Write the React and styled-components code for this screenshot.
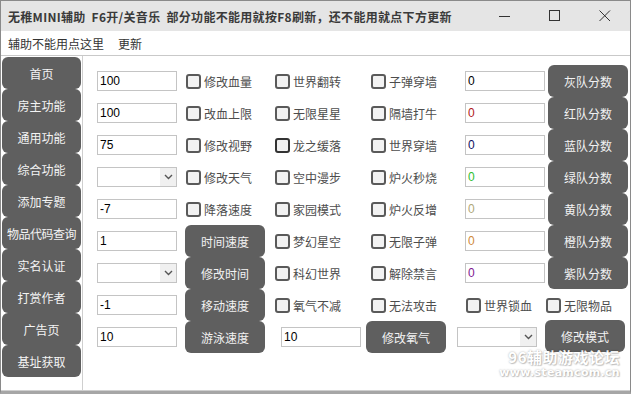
import React from "react";
import styled, { createGlobalStyle } from "styled-components";

const Global = createGlobalStyle`
  html, body { margin: 0; padding: 0; background: #fff; }
  body { font-family: "Noto Sans CJK SC", "Noto Sans", sans-serif; }
  * { box-sizing: border-box; }
`;

const Window = styled.div`
  position: relative;
  width: 631px;
  height: 394px;
  border: 1px solid #8a8a8a;
  border-bottom: 3px solid #a6a6a6;
  background: #fff;
  display: flex;
  flex-direction: column;
  overflow: hidden;
`;

const TitleBar = styled.div`
  height: 30px;
  background: #e5e5e5;
  display: flex;
  align-items: center;
  padding-left: 7px;
`;

const Title = styled.div`
  font-size: 12px;
  font-weight: 700;
  color: #3a3a3a;
  white-space: pre;
  letter-spacing: 0.3px;
`;

const Controls = styled.div`
  margin-left: auto;
  display: flex;
  height: 100%;
`;

const Ctrl = styled.div`
  width: 50px;
  height: 100%;
  display: flex;
  align-items: center;
  justify-content: center;
`;

const MenuBar = styled.div`
  height: 25px;
  border-bottom: 1px solid #c9c9c9;
  display: flex;
  align-items: center;
  padding-left: 7px;
  gap: 14px;
  font-size: 12px;
  color: #333;
`;

const Body = styled.div`
  flex: 1;
  display: flex;
  border-bottom: 1px solid #cfcfcf;
`;

const Nav = styled.div`
  width: 82px;
  border-right: 1px solid #cfcfcf;
  padding: 1px 0 0 1px;
  display: flex;
  flex-direction: column;
`;

const NavButton = styled.div`
  width: 79px;
  height: 32px;
  border-radius: 6px;
  background: #5f5f5f;
  color: #f4f4f4;
  font-size: 12px;
  display: flex;
  align-items: center;
  justify-content: center;
  padding-top: ${(p) => (p.$tight ? "0" : "1px")};
  letter-spacing: ${(p) => (p.$tight ? "-0.5px" : "0")};
`;

const Panel = styled.div`
  flex: 1;
  display: grid;
  grid-template-columns: 88px 88px 96px 94px 85px 80px;
  grid-template-rows: repeat(9, 32px);
  padding: 9px 0 0 14px;
  align-content: start;
`;

const TextBox = styled.input`
  width: ${(p) => p.$w || 80}px;
  height: 20px;
  border: 1px solid #c4c4c4;
  padding: 0 0 0 2px;
  margin: 0 0 0 ${(p) => p.$ml || 0}px;
  font-family: "Liberation Sans", Arial, sans-serif;
  font-size: 12px;
  color: ${(p) => p.$color || "#000"};
  align-self: center;
  outline: none;
  background: #fff;
`;

const SelectBox = styled.div`
  width: 80px;
  height: 20px;
  border: 1px solid #c4c4c4;
  align-self: center;
  display: flex;
  justify-content: flex-end;
  margin-left: ${(p) => p.$ml || 0}px;
  background: #fff;
`;

const SelectArrow = styled.div`
  width: 16px;
  height: 100%;
  background: #f0f0f0;
  display: flex;
  align-items: center;
  justify-content: center;
`;

const Button = styled.div`
  width: 80px;
  height: 32px;
  border-radius: 6px;
  background: #5f5f5f;
  color: #f2f2f2;
  font-size: 12px;
  display: flex;
  align-items: center;
  justify-content: center;
  margin-left: ${(p) => p.$ml || 0}px;
  margin-top: ${(p) => p.$mt || 0}px;
  flex-shrink: 0;
`;

const Check = styled.label`
  display: flex;
  align-items: center;
  gap: 3px;
  font-size: 12px;
  color: #4d4d4d;
  align-self: center;
  margin-left: ${(p) => p.$ml || 0}px;
  white-space: nowrap;
`;

const Box = styled.span`
  width: 15px;
  height: 15px;
  border: 2px solid ${(p) => (p.$dark ? "#333" : "#5a5a5a")};
  border-radius: 3px;
  background: #f2f2f2;
  display: inline-block;
`;

const Span = styled.div`
  grid-column: ${(p) => p.$col};
  display: flex;
  align-items: center;
`;

const Watermark = styled.div`
  position: absolute;
  right: 10px;
  bottom: 12px;
  text-align: right;
  color: #ffffff;
  font-weight: 700;
  text-shadow: 0 0 2px rgba(0, 0, 0, 0.35), 1px 1px 1px rgba(0, 0, 0, 0.2);
  opacity: 0.9;
  display: flex;
  flex-direction: column;
  gap: 1px;
`;

const WmTop = styled.div`
  font-size: 15px;
  line-height: 17px;
  letter-spacing: 0.5px;
`;

const WmBottom = styled.div`
  font-family: "DejaVu Sans", sans-serif;
  font-size: 11px;
  line-height: 13px;
  letter-spacing: 0.3px;
`;

const CB = ({ label, dark, ml }) => (
  <Check $ml={ml}>
    <Box $dark={dark} />
    {label}
  </Check>
);

const Chevron = () => (
  <svg width="9" height="6" viewBox="0 0 9 6">
    <path d="M1 1 L4.5 4.5 L8 1" fill="none" stroke="#555" strokeWidth="1.4" />
  </svg>
);

const Select = ({ ml }) => (
  <SelectBox $ml={ml}>
    <SelectArrow>
      <Chevron />
    </SelectArrow>
  </SelectBox>
);

const navItems = [
  "首页",
  "房主功能",
  "通用功能",
  "综合功能",
  "添加专题",
  "物品代码查询",
  "实名认证",
  "打赏作者",
  "广告页",
  "基址获取",
];

export default function App() {
  return (
    <>
      <Global />
      <Window>
        <TitleBar>
          <Title>{"无稚MINI辅助  F6开/关音乐  部分功能不能用就按F8刷新，还不能用就点下方更新"}</Title>
          <Controls>
            <Ctrl>
              <svg width="12" height="12" viewBox="0 0 12 12">
                <path d="M0 6.5 H11" stroke="#333" strokeWidth="1" />
              </svg>
            </Ctrl>
            <Ctrl>
              <svg width="12" height="12" viewBox="0 0 12 12">
                <rect x="0.5" y="0.5" width="10" height="10" fill="none" stroke="#333" strokeWidth="1" />
              </svg>
            </Ctrl>
            <Ctrl>
              <svg width="12" height="12" viewBox="0 0 12 12">
                <path d="M0.5 0.5 L11 11 M11 0.5 L0.5 11" stroke="#333" strokeWidth="1" />
              </svg>
            </Ctrl>
          </Controls>
        </TitleBar>
        <MenuBar>
          <span>辅助不能用点这里</span>
          <span>更新</span>
        </MenuBar>
        <Body>
          <Nav>
            {navItems.map((n) => (
              <NavButton key={n} $tight={n.length > 4}>
                {n}
              </NavButton>
            ))}
          </Nav>
          <Panel>
            {/* row 1 */}
            <TextBox defaultValue="100" />
            <CB label="修改血量" ml={1} />
            <CB label="世界翻转" ml={2} />
            <CB label="子弹穿墙" ml={2} />
            <TextBox defaultValue="0" $ml={2} />
            <Button>灰队分数</Button>
            {/* row 2 */}
            <TextBox defaultValue="100" />
            <CB label="改血上限" ml={1} />
            <CB label="无限星星" ml={2} />
            <CB label="隔墙打牛" ml={2} />
            <TextBox defaultValue="0" $ml={2} $color="#b01818" />
            <Button>红队分数</Button>
            {/* row 3 */}
            <TextBox defaultValue="75" />
            <CB label="修改视野" ml={1} />
            <CB label="龙之缓落" ml={2} dark />
            <CB label="世界穿墙" ml={2} />
            <TextBox defaultValue="0" $ml={2} $color="#101060" />
            <Button>蓝队分数</Button>
            {/* row 4 */}
            <Select />
            <CB label="修改天气" ml={1} />
            <CB label="空中漫步" ml={2} />
            <CB label="炉火秒烧" ml={2} />
            <TextBox defaultValue="0" $ml={2} $color="#30c030" />
            <Button>绿队分数</Button>
            {/* row 5 */}
            <TextBox defaultValue="-7" />
            <CB label="降落速度" ml={1} />
            <CB label="家园模式" ml={2} />
            <CB label="炉火反增" ml={2} />
            <TextBox defaultValue="0" $ml={2} $color="#b0a878" />
            <Button>黄队分数</Button>
            {/* row 6 */}
            <TextBox defaultValue="1" />
            <Button>时间速度</Button>
            <CB label="梦幻星空" ml={2} />
            <CB label="无限子弹" ml={2} />
            <TextBox defaultValue="0" $ml={2} $color="#d08a3a" />
            <Button>橙队分数</Button>
            {/* row 7 */}
            <Select />
            <Button>修改时间</Button>
            <CB label="科幻世界" ml={2} />
            <CB label="解除禁言" ml={2} />
            <TextBox defaultValue="0" $ml={2} $color="#801890" />
            <Button>紫队分数</Button>
            {/* row 8 */}
            <TextBox defaultValue="-1" />
            <Button>移动速度</Button>
            <CB label="氧气不减" ml={2} />
            <CB label="无法攻击" ml={2} />
            <CB label="世界锁血" ml={3} />
            <CB label="无限物品" ml={-2} />
            {/* row 9 */}
            <TextBox defaultValue="10" />
            <Button>游泳速度</Button>
            <Span $col="3 / 7">
              <TextBox defaultValue="10" $ml={8} />
              <Button $ml={5}>修改氧气</Button>
              <Select ml={11} />
              <Button $ml={8} $mt={-2}>修改模式</Button>
            </Span>
          </Panel>
        </Body>
        <Watermark>
          <WmTop>96辅助游戏论坛</WmTop>
          <WmBottom>www.steamcom.cn</WmBottom>
        </Watermark>
      </Window>
    </>
  );
}
